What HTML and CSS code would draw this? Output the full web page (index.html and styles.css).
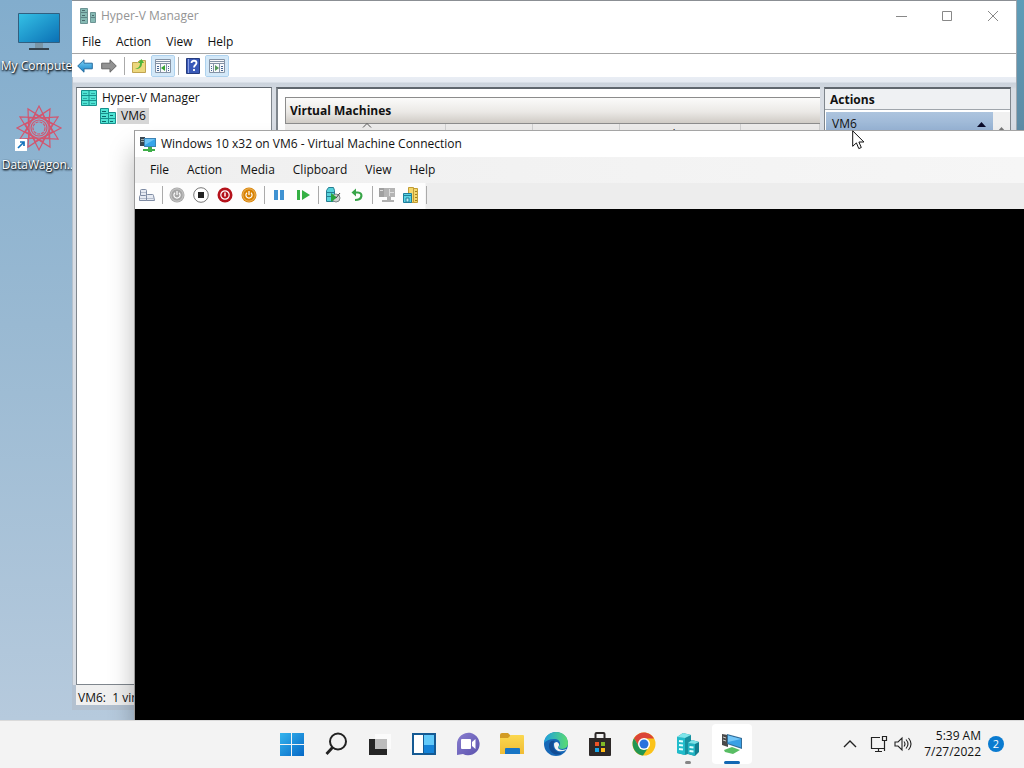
FILE: index.html
```html
<!DOCTYPE html>
<html lang="en">
<head>
<meta charset="utf-8">
<title>Desktop</title>
<link rel="stylesheet" href="styles.css">
</head>
<body>
<svg class="defs" aria-hidden="true">
  <defs>
    <linearGradient id="gScreen" x1="0" y1="0" x2="1" y2="1"><stop offset="0" stop-color="#35c1e6"/><stop offset="1" stop-color="#0a6fb4"/></linearGradient>
    <linearGradient id="gWin" x1="0" y1="0" x2="1" y2="1"><stop offset="0" stop-color="#35b5ee"/><stop offset="1" stop-color="#0668c6"/></linearGradient>
    <linearGradient id="gEdge" x1="0" y1="0" x2="1" y2="0"><stop offset="0" stop-color="#1e9fe0"/><stop offset="1" stop-color="#5bdc70"/></linearGradient>
    <linearGradient id="gFolder" x1="0" y1="0" x2="0" y2="1"><stop offset="0" stop-color="#fbd84f"/><stop offset="1" stop-color="#f0bc35"/></linearGradient>
    <linearGradient id="gBack" x1="0" y1="0" x2="0" y2="1"><stop offset="0" stop-color="#7fd4f8"/><stop offset="1" stop-color="#1580c4"/></linearGradient>
    <linearGradient id="gChat" x1="0" y1="0" x2="1" y2="1"><stop offset="0" stop-color="#8a7fd0"/><stop offset="1" stop-color="#5b52ad"/></linearGradient>
    <symbol id="servers" viewBox="0 0 16 16">
      <path d="M.5.5h8v15h-8zM8.500 4.500h7v11h-7z" fill="#4fe3d3" stroke="#178f8c"/>
      <path d="M1 5.500h7M1 10.500h7M9 10.500h6" stroke="#178f8c"/>
      <path d="M2 3.500h4M2 8.500h4M2 13.500h4M10 7.500h3M10 13.500h3" stroke="#0e6768"/>
    </symbol>
    <symbol id="remote" viewBox="0 0 16 16">
      <path d="M0 1h5v9H0z" fill="#3a4650"/><path d="M1 3.500h3M1 5.500h3" stroke="#9aa"/>
      <path d="M4 2h12v9H4z" fill="#3d83b4"/><path d="M5 3h10v7H5z" fill="#36a5ea"/><path d="M5 3h10L5 9z" fill="#6cc4f6"/>
      <path d="M8 11h4v2h3v2h-3v1H8v-1H3v-2h5z" fill="#3fae49"/>
    </symbol>
    <symbol id="power" viewBox="0 0 16 16"><circle cx="8" cy="8" r="7.500"/><circle cx="8" cy="8" r="6.200" fill="none" stroke="#fff" stroke-opacity=".4"/><path d="M6 5.700a3.100 3.100 0 1 0 4 0M8 4v4" fill="none" stroke="#fff" stroke-width="1.200"/></symbol>
  </defs>
</svg>

<div class="screen">
  <main class="desktop">
    <div class="shortcuts">
      <a class="shortcut" href="#computer">
        <svg width="44" height="44" viewBox="0 0 44 44"><path d="M1.500 4.500h41v29h-41z" fill="url(#gScreen)" stroke="#315f80"/><path d="M18 34h8v5h-8z" fill="#7b95a6"/><path d="M12 39h20v2H12z" fill="#36424d"/></svg>
        <span>My Computer</span>
      </a>
      <a class="shortcut" href="#datawagon">
        <svg width="48" height="48" viewBox="0 0 48 48">
          <g fill="none" stroke="#d2566f" stroke-width="1.200" transform="translate(24 24)">
            <g id="star"><path d="M0-22 7-8 22 0 7 8 0 22-7 8-22 0-7-8z"/><path d="M-10-10 10-10 10 10-10 10z"/></g>
            <use href="#star" transform="rotate(30)"/><use href="#star" transform="rotate(60)"/>
            <circle r="8"/><circle r="6" stroke-dasharray="3 1"/>
          </g>
          <path d="M0 35h12v12H0z" fill="#fff"/><path d="M3 44l6-6M5 38h4v4" fill="none" stroke="#1473bd" stroke-width="1.700"/>
        </svg>
        <span>DataWagon...</span>
      </a>
    </div>

    <section class="window manager" aria-label="Hyper-V Manager">
      <header class="manager-title">
        <svg width="18" height="18" viewBox="0 0 18 18"><path d="M1.500 1.500h7v15h-7zM11.500 5.500h5v10h-5z" fill="#86bab4" stroke="#6c9494"/><path d="M2 5.500h6M2 10.500h6M12 10.500h4" stroke="#5d8486"/><path d="M3 3.500h3M3 8.500h3M3 13.500h3M13 8.500h2" stroke="#48696c"/></svg>
        <h1>Hyper-V Manager</h1>
        <div class="window-buttons">
          <button aria-label="Minimize"><svg width="12" height="12"><path d="M1 6.500h11" stroke="#888"/></svg></button>
          <button aria-label="Maximize"><svg width="12" height="12"><path d="M1.500 1.500h9v9h-9z" fill="none" stroke="#888"/></svg></button>
          <button aria-label="Close"><svg width="12" height="12"><path d="M1 1l10 10M11 1L1 11" stroke="#888"/></svg></button>
        </div>
      </header>
      <nav class="menu manager-menu"><button>File</button><button>Action</button><button>View</button><button>Help</button></nav>
      <div class="toolbar manager-toolbar">
        <button aria-label="Back"><svg width="16" height="16" viewBox="0 0 16 16"><path d="M.7 8 7 1.800v3.400h8.300v5.600H7v3.400z" fill="url(#gBack)" stroke="#276c9f"/></svg></button>
        <button aria-label="Forward"><svg width="16" height="16" viewBox="0 0 16 16"><path d="M15.300 8 9 1.800v3.400H.7v5.600H9v3.400z" fill="#929292" stroke="#666"/></svg></button>
        <i class="sep"></i>
        <button aria-label="Up one level"><svg width="16" height="16" viewBox="0 0 16 16"><path d="M1.500 4.500h5l2-2h6v12h-13z" fill="#ecd77c" stroke="#c0a350"/><path d="M4 11c4-1 5-3 5-6H7l3.500-4L13 5h-2c0 4-2 6-7 6z" fill="#4eb53b"/></svg></button>
        <button class="on" aria-label="Show console tree"><svg width="16" height="16" viewBox="0 0 16 16"><path d="M.5 1.500h15v13H.5z" fill="#f8f9fb" stroke="#8593a5"/><path d="M1 3.500h14M1 5.500h14M5.500 6v8M11.500 6v8" stroke="#8593a5"/><path d="M2 8.500h2M2 10.500h2M2 12.500h2M13 8.500h1M13 10.500h1M13 12.500h1" stroke="#416390"/><path d="M10 7v6l-4-3z" fill="#35a431"/></svg></button>
        <i class="sep"></i>
        <button aria-label="Help"><svg width="14" height="16" viewBox="0 0 14 16"><path d="M.5.5h13v15H.5z" fill="#3959b8" stroke="#263c7e"/><path d="M2.500 1v14" stroke="#8ba1e5"/><path d="M5.500 5c0-3 5-3 5 0 0 2-2.500 2-2.500 4.500M8 11v2" fill="none" stroke="#fff" stroke-width="1.800"/></svg></button>
        <button class="on" aria-label="Show action pane"><svg width="16" height="16" viewBox="0 0 16 16"><path d="M.5 1.500h15v13H.5z" fill="#f8f9fb" stroke="#8593a5"/><path d="M1 3.500h14M1 5.500h14M4.500 6v8M10.500 6v8" stroke="#8593a5"/><path d="M2 8.500h1M2 10.500h1M2 12.500h1M12 8.500h2M12 10.500h2M12 12.500h2" stroke="#416390"/><path d="M6 7v6l4-3z" fill="#559a59"/></svg></button>
      </div>
      <div class="panes">
        <aside class="pane tree">
          <a href="#manager"><svg width="16" height="16" viewBox="0 0 16 16"><path d="M.5.500h15v15H.5z" fill="#4fe3d3" stroke="#178f8c"/><path d="M8 1v14M1 5.500h14M1 10.500h14" stroke="#178f8c"/><path d="M2 3.500h4M10 3.500h4M2 8.500h4M10 8.500h4M2 13.500h4M10 13.500h4" stroke="#2aa9a3"/></svg><span>Hyper-V Manager</span></a>
          <a class="child" href="#vm6"><svg width="16" height="16"><use href="#servers"/></svg><span class="selected">VM6</span></a>
        </aside>
        <section class="pane center">
          <h2>Virtual Machines</h2>
          <table>
            <thead><tr><th class="c-name">Name</th><th class="c-state">State</th><th class="c-cpu">CPU Usage</th><th class="c-mem">Assigned Memory</th><th>Uptime</th></tr></thead>
          </table>
          <svg class="sort" width="10" height="5"><path d="M1 4.500l4-4 4 4" fill="none" stroke="#555"/></svg>
        </section>
        <aside class="pane actions">
          <h2>Actions</h2>
          <div class="actions-body"><button class="group"><span>VM6</span><svg width="9" height="5"><path d="M0 5l4.500-5L9 5z" fill="#0a0a28"/></svg></button><div class="scroll"><svg width="9" height="5"><path d="M0 5l4.500-5L9 5z" fill="#777"/></svg></div></div>
        </aside>
      </div>
      <footer class="status">VM6:&nbsp; 1 virtual machine selected.</footer>
    </section>

    <section class="window connection" aria-label="Virtual Machine Connection">
      <header class="connection-title"><svg width="16" height="16"><use href="#remote"/></svg><h1>Windows 10 x32 on VM6 - Virtual Machine Connection</h1></header>
      <nav class="menu connection-menu"><button>File</button><button>Action</button><button>Media</button><button>Clipboard</button><button>View</button><button>Help</button></nav>
      <div class="toolbar connection-toolbar">
        <button aria-label="Ctrl+Alt+Delete"><svg width="16" height="16" viewBox="0 0 16 16"><path d="M1.500 8V3.500q0-1 1-1h4q1 0 1 1V8M.5 13.500v-4q0-1 1-1h5q1 0 1 1v4zM7.500 13.500v-5q0-1 1-1h5q1 0 1 1l1 5z" fill="#e6eaf2" stroke="#7e8ba3"/><path d="M1 11.500h6M8 11.500h7M2 5.500h5" stroke="#b5bdcc"/></svg></button>
        <i class="sep"></i>
        <button aria-label="Start"><svg width="16" height="16" fill="#a5a5a5"><use href="#power"/></svg></button>
        <button aria-label="Turn off"><svg width="16" height="16" viewBox="0 0 16 16"><circle cx="8" cy="8" r="7.300" fill="#fff" stroke="#777"/><path d="M5 5h6v6H5z" fill="#222"/></svg></button>
        <button aria-label="Shut down"><svg width="16" height="16" viewBox="0 0 16 16"><circle cx="8" cy="8" r="7.500" fill="#b5121b"/><circle cx="8" cy="8" r="4.200" fill="none" stroke="#fff" stroke-width="1.200"/><path d="M8 5.500v4" stroke="#fff" stroke-width="1.500"/></svg></button>
        <button aria-label="Save"><svg width="16" height="16" fill="#d98200"><use href="#power"/></svg></button>
        <i class="sep"></i>
        <button aria-label="Pause"><svg width="16" height="16"><path d="M3 3h4v10H3zM9 3h4v10H9z" fill="#3f92d2"/></svg></button>
        <button aria-label="Resume"><svg width="16" height="16"><path d="M2 3h3v10H2zM7 3l8 5-8 5z" fill="#35b044"/></svg></button>
        <i class="sep"></i>
        <button aria-label="Checkpoint"><svg width="16" height="16" viewBox="0 0 16 16"><path d="M1.500 3.500l2-3h5l1 3v11h-8z" fill="#57d2dc" stroke="#267e92"/><path d="M2 5.500h7M2 9.500h6" stroke="#267e92"/><circle cx="11" cy="11" r="4" fill="#d0d3d3" stroke="#7c8686"/><path d="M6 6l6 4.500L6 15z" fill="#28a43c"/><path d="M11 11l4-5" stroke="#444"/></svg></button>
        <button aria-label="Revert"><svg width="16" height="16" viewBox="0 0 16 16"><path d="M5 5.500h4c5 0 5 7.500-3 7.500" fill="none" stroke="#37a447" stroke-width="2.200"/><path d="M2.500 5.500 7 1.500v8z" fill="#37a447"/></svg></button>
        <i class="sep"></i>
        <button aria-label="Enhanced session"><svg width="16" height="16" viewBox="0 0 16 16"><path d="M0 1h5v9H0z" fill="#a0a0a0"/><path d="M5 1h11v9H5z" fill="#b4b4b4"/><path d="M8 10h4v3h3v2H3v-2h5z" fill="#b0b0b0"/><path d="M10.500 2v7M11 5.500h4M1 3.500h3" stroke="#ddd"/></svg></button>
        <button aria-label="Share"><svg width="16" height="16" viewBox="0 0 16 16"><path d="M5.500.5h5v15h-5zM10.500 1.500h4v14h-4z" fill="#f3d76c" stroke="#c29d35"/><path d="M.5 6.500h8v9h-8z" fill="#5bd3e3" stroke="#1e7f9c"/><path d="M1 8.500h7M3 11h3v4H3z" fill="#bdf2f7" stroke="#1e7f9c"/><path d="M12 4.500h2M12 7.500h2M12 10.500h2M12 13.500h2" stroke="#a17e1f"/></svg></button>
        <i class="sep"></i>
      </div>
      <div class="guest"></div>
    </section>

    <svg class="cursor" width="13" height="20" viewBox="0 0 13 20"><path d="M.7.800v15.500l3.700-3.400 2.400 5.700 2.500-1.100-2.400-5.500h5z" fill="#fff" stroke="#111"/></svg>
  </main>

  <footer class="taskbar">
    <nav class="apps">
      <button aria-label="Start"><svg width="24" height="24"><path d="M0 1h11v11H0zM12 1h12v11H12zM0 13h11v11H0zM12 13h12v11H12z" fill="url(#gWin)"/></svg></button>
      <button aria-label="Search"><svg width="24" height="24" fill="none" stroke="#222" stroke-width="2"><circle cx="14" cy="9.500" r="8"/><path d="M8.500 15.500L2.500 22" stroke-width="2.800"/></svg></button>
      <button aria-label="Task view"><svg width="24" height="24"><path d="M7 2h16v15H7z" fill="#fbfbfb"/><path d="M1 7h18v16H1z" fill="#252525"/><path d="M7 7h12v10H7z" fill="#bcbcbc"/></svg></button>
      <button aria-label="Widgets"><svg width="24" height="24"><path d="M1 2h22v20H1z" fill="#fff" stroke="#155a93" stroke-width="2"/><path d="M12 3h10v10H12z" fill="#63cafa"/><path d="M12 13h10v8H12z" fill="#1583d8"/><path d="M11.500 2v20" stroke="#155a93"/></svg></button>
      <button aria-label="Chat"><svg width="24" height="24"><path d="M1 23V12A11.300 11.300 0 1 1 7 22z" fill="url(#gChat)"/><rect x="5" y="7" width="10" height="10" rx="1" fill="#fff"/><path d="M16 10l3.500-3v10L16 14z" fill="#fff"/></svg></button>
      <button aria-label="File Explorer"><svg width="26" height="24"><path d="M1 3q0-2 2-2h6l3 3v4H1z" fill="#d29b25"/><path d="M1 6h8l3-3h12q1 0 1 1v18H1z" fill="url(#gFolder)"/><path d="M6 22v-5q0-1 1-1h13q1 0 1 1v5z" fill="#1875c5"/></svg></button>
      <button aria-label="Edge"><svg width="24" height="24" viewBox="0 0 24 24"><circle cx="12" cy="12" r="12" fill="#1768b7"/><path d="M0 11C1-3 23-4 24 11c0 7-8 7-10 4 4-3 2-8-4-8-5 0-8 2-10 4z" fill="url(#gEdge)"/><path d="M10 12c0 7 6 9 12 6l1-1c-2 1-9 2-9-2 2-2 1-4-1-5-2 0-3 1-3 2z" fill="#f3f3f3"/><path d="M5 14c0-4 2-6 6-5-5 4 0 12 7 12-5 4-13 0-13-7z" fill="#124c94"/></svg></button>
      <button aria-label="Store"><svg width="24" height="24"><path d="M7.500 7V2q0-1 1-1h7q1 0 1 1v5" fill="none" stroke="#2d2928" stroke-width="2"/><path d="M1 6h22v17q0 1-1 1H2q-1 0-1-1z" fill="#2d2928"/><path d="M7 10h4v4H7z" fill="#ef5427"/><path d="M13 10h4v4h-4z" fill="#7fba28"/><path d="M7 16h4v4H7z" fill="#18a5e7"/><path d="M13 16h4v4h-4z" fill="#ffba17"/></svg></button>
      <button aria-label="Chrome"><svg width="24" height="24" viewBox="0 0 24 24"><circle cx="12" cy="12" r="11.500" fill="#fbc31a"/><path d="M2 6.200C7-2 18-1 22 6.500H12l-5 8z" fill="#db4437"/><path d="M2 6.200C-2 13 3 23 11 23.500l6-9H7z" fill="#229653"/><circle cx="12" cy="12" r="6" fill="#fff"/><circle cx="12" cy="12" r="4.500" fill="#2872dd"/></svg></button>
      <button class="running" aria-label="Hyper-V Manager"><svg width="24" height="24" viewBox="0 0 24 24"><path d="M1 5l6-4 8 2v18l-6 2-8-2z" fill="#16909f"/><path d="M1 5l8 1v17l-8-2z" fill="#20bccb"/><path d="M1 5l6-4 8 2-6 3z" fill="#7ee5ea"/><path d="M12 11l4-3 7 2v10l-4 4-7-2z" fill="#137f90"/><path d="M12 11l7 1v12l-7-2z" fill="#20b3c2"/><path d="M12 11l4-3 7 2-4 2z" fill="#7be2e8"/><path d="M3 9l4 .5M3 13l4 .5M3 17l4 .5M13.500 15l4 .5M13.500 19l4 .5" stroke="#e2ffff" stroke-width="1.800"/></svg></button>
      <button class="active" aria-label="Virtual Machine Connection"><svg width="24" height="24" viewBox="0 0 24 24"><path d="M2 2l6 1v12l-6-2z" fill="#4a4a4a"/><path d="M3 5l3 1M3 8l3 1" stroke="#ccc"/><path d="M7 2l15 4v11L7 12z" fill="#356d97"/><path d="M8 3.500l13 3.500v8.500L8 11.200z" fill="#3aa0e6"/><path d="M8 3.500l13 3.500L8 10z" fill="#75c7f7"/><path d="M4 18l8-3 8 3-7 4-8-2z" fill="#59bd64"/></svg></button>
    </nav>
    <div class="tray">
      <button aria-label="Hidden icons"><svg width="14" height="16"><path d="M1 11l6-6 6 6" fill="none" stroke="#222" stroke-width="1.400"/></svg></button>
      <button class="network" aria-label="Network"><svg width="18" height="16" fill="none" stroke="#222"><path d="M10 1.500H1.500v11h13V9M5 15.500h7M8.500 13v2M12.500.5h4v4h-4zM14.500 5v10" stroke-width="1.200"/></svg></button>
      <button aria-label="Volume"><svg width="18" height="16" fill="none" stroke="#222" stroke-width="1.100"><path d="M1 6h3l4-4v12l-4-4H1zM10 5.500q2 2.500 0 5M12 3.500q4 4.500 0 9M14.500 2q5 6 0 12"/></svg></button>
      <div class="clock"><time>5:39 AM</time><time>7/27/2022</time></div>
      <span class="badge">2</span>
    </div>
  </footer>
</div>
</body>
</html>
```
FILE: styles.css
```css
* { box-sizing: border-box; }
body { margin: 0; font-family: "Open Sans", "Noto Sans", sans-serif; font-size: 12px; line-height: 16px; color: #111; }
h1, h2 { margin: 0; font-size: 12px; font-weight: 400; }
button { margin: 0; padding: 0; border: 0; background: none; font: inherit; color: inherit; }
a { color: inherit; text-decoration: none; }
svg { display: block; flex: none; }
.defs { position: absolute; width: 0; height: 0; }
.screen { height: 100vh; display: flex; flex-direction: column; overflow: hidden; }

.desktop { flex: 1; min-height: 0; position: relative; overflow: hidden; background: linear-gradient(#82adcd, #99b9d2 45%, #b6cadd); }
.desktop::after { content: ""; position: absolute; top: 0; right: 0; width: 7px; height: 130px; background: linear-gradient(#5e9db8, #5e8ba5); }
.shortcuts { width: 78px; padding-top: 9px; display: flex; flex-direction: column; gap: 30px; }
.shortcut { display: flex; flex-direction: column; align-items: center; gap: 5px; color: #fff; white-space: nowrap; text-shadow: 1px 1px 2px #000, 0 1px 2px #123; }

.window { position: absolute; display: flex; flex-direction: column; }
.manager { left: 72px; top: 0; right: 7px; bottom: 10px; overflow: hidden; background: #b5c1ce; border-top: 1px solid #8b8f94; border-right: 1px solid #a0a8b0; }
.manager-title { height: 30px; flex: none; display: flex; align-items: center; gap: 4px; padding-left: 7px; background: #fff; color: #949494; }
.window-buttons { margin-left: auto; display: flex; }
.window-buttons button { width: 46px; height: 28px; display: grid; place-items: center; }
.menu { flex: none; display: flex; align-items: center; }
.manager-menu { height: 22px; padding-left: 2px; background: #fff; }
.manager-menu button { padding: 0 7px 0 8px; }
.toolbar { flex: none; display: flex; align-items: center; gap: 2px; }
.toolbar button { width: 22px; height: 22px; display: grid; place-items: center; }
.toolbar .on { height: 20px; border-radius: 1px; background: #d3e8f8; outline: 1px solid #aed2ee; }
.sep { width: 4px; height: 18px; background: linear-gradient(#aaa, #aaa) center / 1px 100% no-repeat; }
.manager-toolbar { height: 24px; padding-left: 2px; border-top: 1px solid #a6a6a6; background: #fff; }
.panes { flex: 1; min-height: 0; display: flex; gap: 4px; padding: 10px 5px 0 3px; background: linear-gradient(#e9edf4, #e6ebf2 5px, #cbd3dc 6px, #cfd6df 10px, #d8dde4 12px); border-left: 1px solid #b6c2ce; }
.pane { background: #fff; border: 1px solid #7f868d; border-top: 2px solid #5f666d; overflow: hidden; }
.tree { width: 196px; flex: none; padding: 1px 0 0 4px; border-top-width: 1px; }
.tree a { display: flex; align-items: center; gap: 5px; height: 18px; }
.tree .child { padding-left: 19px; gap: 1px; }
.selected { padding: 0 3px 0 4px; background: #d6d6d6; }
.center { flex: 1; min-width: 0; position: relative; padding: 8px 0 0 7px; border-left-width: 2px; border-right: 0; }
.center h2 { height: 27px; padding: 5px 4px; font-weight: 700; border: 1px solid #8c8c8c; border-right: 0; background: linear-gradient(#fbfbfa, #ebe9e6 55%, #cfcbc5); }
.center table { width: 100%; table-layout: fixed; border-collapse: collapse; background: #ecebea; }
.center th { padding: 3px 6px; font-weight: 400; text-align: left; border-right: 1px solid #cfcfcf; }
.c-name { width: 160px; } .c-state { width: 87px; } .c-cpu { width: 87px; } .c-mem { width: 121px; }
.sort { position: absolute; left: 84px; top: 34px; }
.actions { width: 187px; flex: none; display: flex; flex-direction: column; }
.actions h2 { height: 21px; padding: 3px 5px; font-weight: 700; background: #eff1f3; border-bottom: 1px solid #a0a6ac; }
.actions-body { flex: 1; display: flex; align-items: flex-start; padding: 2px 0 0 1px; }
.group { flex: 1; height: 24px; display: flex; align-items: center; justify-content: space-between; padding: 0 7px 0 6px; background: linear-gradient(#adc4de, #8fadd0); }
.scroll { width: 17px; align-self: stretch; padding: 15px 4px; background: #f0f0f0; }
.status { height: 25px; flex: none; padding: 5px 2px 0; border: solid #b3c1d0; border-width: 0 4px 5px; background: #f0f0f0; white-space: nowrap; }

.connection { left: 134px; top: 130px; right: 0; bottom: 0; background: #fff; border-top: 1px solid #a5a5a5; border-left: 1px solid #9b9b9b; box-shadow: 0 20px 24px rgba(0, 0, 0, .28); z-index: 1; }
.connection-title { height: 26px; flex: none; display: flex; align-items: center; gap: 5px; padding-left: 5px; }
.connection-menu { height: 26px; padding-left: 6px; background: linear-gradient(90deg, #efefef, #f6f6f6); }
.connection-menu button { padding: 0 9px; }
.connection-toolbar { height: 26px; padding: 0 0 2px 1px; background: linear-gradient(90deg, #fdfdfd 290px, #ededed 291px); }
.guest { flex: 1; background: #000; }
.cursor { position: absolute; left: 852px; top: 130px; z-index: 2; }

.taskbar { height: 48px; flex: none; display: grid; grid-template-columns: 1fr auto 1fr; align-items: center; padding-bottom: 1px; border-top: 1px solid #dadada; background: #f3f3f3; }
.apps { grid-column: 2; display: flex; gap: 4px; }
.apps button { position: relative; width: 40px; height: 40px; display: grid; place-items: center; border-radius: 4px; }
.apps .active { background: #fff; }
.running::after, .active::after { content: ""; position: absolute; bottom: 0; left: 17px; width: 6px; height: 3px; border-radius: 2px; background: #858585; }
.active::after { left: 12px; width: 16px; background: #1268b3; }
.tray { justify-self: end; display: flex; align-items: center; padding-right: 20px; }
.tray button { padding: 0 3px; }
.tray .network { padding-left: 10px; }
.clock { display: flex; flex-direction: column; margin: 0 7px 0 9px; text-align: right; }
.badge { width: 16px; height: 16px; border-radius: 50%; background: #0a7bd0; color: #fff; font-size: 11px; text-align: center; }
```
